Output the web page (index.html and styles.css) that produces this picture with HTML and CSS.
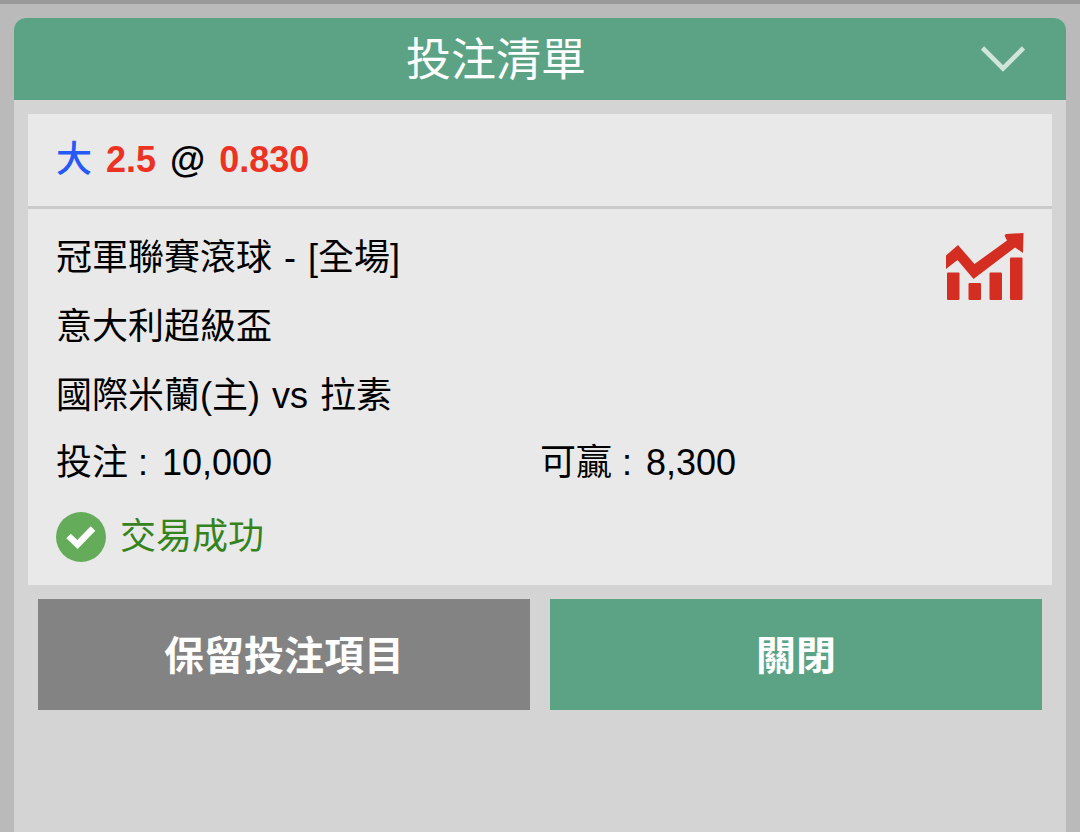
FILE: index.html
```html
<!DOCTYPE html>
<html lang="zh-Hant">
<head>
<meta charset="utf-8">
<meta name="viewport" content="width=device-width, initial-scale=1">
<title>投注清單</title>
<link rel="stylesheet" href="styles.css">
</head>
<body>
<main class="panel">
  <header class="panel-header">
    <h1 class="panel-title">投注清單</h1>
    <button class="collapse" type="button" aria-label="收合">
      <svg class="chevron" viewBox="0 0 44 26" aria-hidden="true"><path d="M1.500 2 22 22.500 42.500 2" fill="none" stroke="#cfe5da" stroke-width="4.600"/></svg>
    </button>
  </header>
  <div class="panel-body">
    <section class="slip">
      <p class="odds"><span class="pick">大</span> <span class="value">2.5</span> <span>@</span> <span class="value">0.830</span></p>
      <div class="detail">
        <div class="match">
          <div class="match-text">
            <p class="line"><span>冠軍聯賽滾球</span> <span>-</span> <span>[全場]</span></p>
            <p class="line">意大利超級盃</p>
            <p class="line"><span>國際米蘭(主)</span> <span>vs</span> <span>拉素</span></p>
          </div>
          <button class="stats" type="button" aria-label="統計">
            <svg class="stats-icon" viewBox="0 0 78 68" aria-hidden="true" fill="#d42e22">
              <path d="M0 22.500 12 12 28.500 31 61 7.500 58.500 2.500 60 1 77.500 0 77 20 75 18.500 69 14.500 27.500 46 11.500 27 0 36Z"/>
              <rect x="1" y="39.500" width="12.500" height="27.500" rx="1"/>
              <rect x="22.500" y="50" width="12.500" height="17" rx="1"/>
              <rect x="43.500" y="39.500" width="12.500" height="27.500" rx="1"/>
              <rect x="64" y="24.500" width="12.500" height="42.500" rx="1"/>
            </svg>
          </button>
        </div>
        <div class="amounts">
          <p class="amount"><span>投注 :</span> <span>10,000</span></p>
          <p class="amount"><span>可贏 :</span> <span>8,300</span></p>
        </div>
        <p class="status">
          <svg class="status-icon" viewBox="0 0 50 50" aria-hidden="true"><circle cx="25" cy="25" r="25" fill="#65ac5a"/><path d="M12.500 24 21.500 32.500 37 16.500" fill="none" stroke="#fff" stroke-width="6.500"/></svg>
          <span>交易成功</span>
        </p>
      </div>
    </section>
    <div class="actions">
      <button class="action keep" type="button">保留投注項目</button>
      <button class="action close" type="button">關閉</button>
    </div>
  </div>
</main>
</body>
</html>
```

FILE: styles.css
```css
* {
  box-sizing: border-box;
}

body {
  display: flex;
  flex-direction: column;
  min-height: 100vh;
  margin: 0;
  padding: 14px 14px 0;
  border-top: 4px solid #999;
  background: #bababa;
  color: #000;
  font-family: "Liberation Sans", "Noto Sans CJK TC", sans-serif;
  font-size: 36px;
}

h1,
p {
  margin: 0;
}

button {
  padding: 0;
  border: 0;
  background: none;
  color: inherit;
  font: inherit;
  cursor: pointer;
}

svg {
  display: block;
}

.panel {
  flex: 1;
  border-radius: 12px 12px 0 0;
  background: #d4d4d4;
  overflow: hidden;
}

.panel-header {
  display: flex;
  align-items: center;
  background: #5ca385;
  color: #fff;
}

.panel-title {
  flex: 1;
  padding-top: 4px;
  font-size: 45px;
  font-weight: 400;
  line-height: 78px;
  text-align: center;
}

.collapse {
  padding: 28px 41px 28px 3px;
}

.chevron {
  width: 44px;
  height: 26px;
}

.panel-body {
  padding: 14px;
}

.slip {
  background: #e9e9e9;
}

.odds {
  display: flex;
  gap: 14px;
  padding: 0 28px;
  border-bottom: 3px solid #cacaca;
  font-weight: 700;
  line-height: 92px;
}

.pick {
  color: #2759f6;
  font-weight: 500;
}

.value {
  color: #ec3323;
}

.detail {
  padding: 14px 28px 23px;
}

.match {
  display: flex;
  justify-content: space-between;
  align-items: flex-start;
}

.line {
  display: flex;
  gap: 12px;
  line-height: 69px;
}

.stats {
  padding-top: 10px;
}

.stats-icon {
  width: 78px;
  height: 68px;
}

.amounts {
  display: grid;
  grid-template-columns: 1fr 1fr;
  line-height: 66px;
}

.amount {
  display: flex;
  gap: 14px;
}

.status {
  display: flex;
  align-items: center;
  gap: 14px;
  padding-top: 16px;
  color: #35831d;
  line-height: 50px;
}

.status-icon {
  width: 50px;
  height: 50px;
}

.actions {
  display: grid;
  grid-template-columns: 1fr 1fr;
  gap: 20px;
  padding: 14px 10px;
}

.action {
  padding-top: 4px;
  color: #fff;
  font-size: 40px;
  font-weight: 700;
  line-height: 107px;
}

.keep {
  background: #838383;
}

.close {
  background: #5ca385;
}
```
